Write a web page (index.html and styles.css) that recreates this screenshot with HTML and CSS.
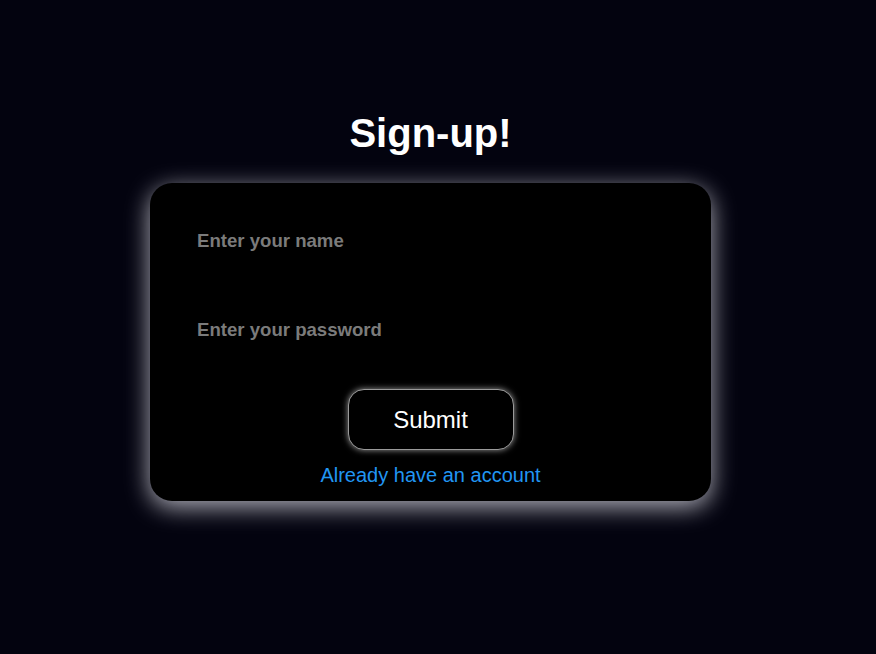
FILE: index.html
```html
<!DOCTYPE html>
<html>
<head>
<meta charset="utf-8">
<link rel="stylesheet" href="styles.css">
</head>
<body>
<div class="page">
  <h1 class="title">Sign-up!</h1>
  <form class="card">
    <input class="field field-name" type="text" placeholder="Enter your name">
    <input class="field field-pass" type="password" placeholder="Enter your password">
    <button class="submit" type="button">Submit</button>
    <a class="link" href="#">Already have an account</a>
  </form>
</div>
</body>
</html>
```

FILE: styles.css
```css
html, body {
  margin: 0;
  padding: 0;
  background: #03030f;
  height: 100%;
}
body {
  font-family: "Liberation Sans", Arial, sans-serif;
}
.page {
  width: 861px;
  display: flex;
  flex-direction: column;
  align-items: center;
}
.title {
  margin: 110px 0 0;
  font-size: 40px;
  line-height: 46px;
  font-weight: bold;
  color: #ffffff;
}
.card {
  margin-top: 27px;
  width: 561px;
  height: 318px;
  box-sizing: border-box;
  background: #000000;
  border-radius: 22px;
  box-shadow: 0 6px 24px rgba(220, 220, 230, 0.8);
  display: flex;
  flex-direction: column;
  align-items: center;
  padding-top: 38px;
}
.field {
  align-self: stretch;
  height: 40px;
  box-sizing: border-box;
  padding: 0 0 0 47px;
  margin: 0;
  border: none;
  outline: none;
  background: transparent;
  color: #ffffff;
  font-family: "Liberation Sans", Arial, sans-serif;
  font-size: 18.6px;
  font-weight: bold;
}
.field::placeholder {
  color: #7b7b7b;
  opacity: 1;
}
.field-pass {
  margin-top: 49px;
}
.submit {
  margin-top: 39px;
  width: 166px;
  height: 61px;
  box-sizing: border-box;
  background: #000000;
  color: #ffffff;
  border: 1.5px solid #9a9a9a;
  border-radius: 16px;
  box-shadow: 0 0 6px rgba(255, 255, 255, 0.6);
  font-family: "Liberation Sans", Arial, sans-serif;
  font-size: 24px;
  padding-top: 2px;
  cursor: pointer;
}
.link {
  margin-top: 14px;
  font-size: 20px;
  line-height: 23px;
  color: #2196f3;
  text-decoration: none;
}
```
